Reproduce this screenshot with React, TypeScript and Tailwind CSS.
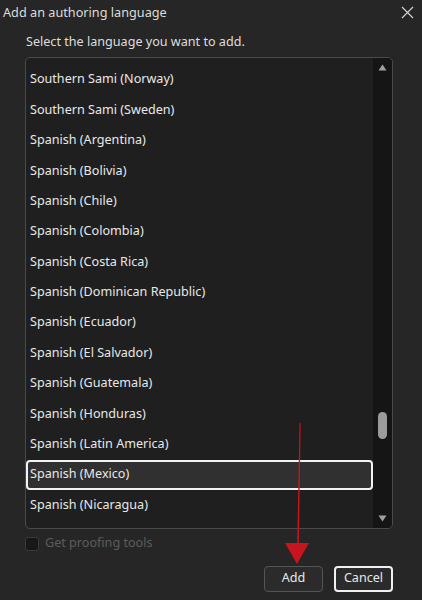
import { useState } from 'react';

const languages = [
  'Southern Sami (Norway)',
  'Southern Sami (Sweden)',
  'Spanish (Argentina)',
  'Spanish (Bolivia)',
  'Spanish (Chile)',
  'Spanish (Colombia)',
  'Spanish (Costa Rica)',
  'Spanish (Dominican Republic)',
  'Spanish (Ecuador)',
  'Spanish (El Salvador)',
  'Spanish (Guatemala)',
  'Spanish (Honduras)',
  'Spanish (Latin America)',
  'Spanish (Mexico)',
  'Spanish (Nicaragua)',
];

export default function App() {
  const [selected, setSelected] = useState('Spanish (Mexico)');

  return (
    <div
      className="relative w-[422px] h-[600px] bg-[#262626] text-[#e8e8e8] overflow-hidden"
      style={{ fontFamily: '"Noto Sans", "Open Sans", sans-serif' }}
    >
      {/* Title bar */}
      <div className="flex items-center justify-between h-[25px] pl-[3px] pr-[8px]">
        <span className="text-[12.7px] text-[#dcdcdc] leading-none">Add an authoring language</span>
        <svg width="13" height="13" viewBox="0 0 13 13" className="text-[#d0d0d0]">
          <path d="M1 1L12 12M12 1L1 12" stroke="currentColor" strokeWidth="1.2" />
        </svg>
      </div>

      <div className="pl-[25px] pr-[29px] pt-[11px]">
        <p className="text-[12.6px] leading-none pl-[1px] text-[#dedede]">Select the language you want to add.</p>

        {/* Language list */}
        <div className="mt-[8px] h-[472px] w-[368px] rounded-[5px] border border-[#4a4a4a] bg-[#1f1f1f] flex overflow-hidden">
          <div className="flex-1 pt-[7px]">
            {languages.map((lang) => (
              <div
                key={lang}
                onClick={() => setSelected(lang)}
                className={`h-[30.4px] flex items-center text-[12.6px] ${
                  lang === selected
                    ? 'bg-[#303030] border-2 border-[#f2f2f2] rounded-[4px] pl-[2px]'
                    : 'pl-[4px]'
                }`}
              >
                {lang}
              </div>
            ))}
          </div>

          {/* Scrollbar */}
          <div className="w-[19px] bg-[#151515] flex flex-col items-center justify-between py-[6px] rounded-r-[4px]">
            <svg width="9" height="7" viewBox="0 0 9 7">
              <path d="M4.5 0.5L8.5 6.5H0.5Z" fill="#a0a0a0" />
            </svg>
            <div className="flex-1 w-full flex flex-col items-center justify-end pb-[76px]">
              <div className="w-[9px] h-[27px] rounded-full bg-[#9b9b9b]" />
            </div>
            <svg width="9" height="7" viewBox="0 0 9 7">
              <path d="M0.5 0.5H8.5L4.5 6.5Z" fill="#a0a0a0" />
            </svg>
          </div>
        </div>

        {/* Disabled checkbox */}
        <label className="flex items-center gap-[6px] mt-[8px]">
          <span className="w-[14px] h-[14px] rounded-[2px] border border-[#3a3a3a] bg-[#181818]" />
          <span className="text-[12.6px] text-[#5c5c5c] leading-none">Get proofing tools</span>
        </label>

        {/* Actions */}
        <div className="flex justify-end gap-[11px] mt-[15px]">
          <button className="w-[59px] h-[26px] rounded-[4px] border border-[#555555] bg-[#2b2b2b] text-[12.6px] text-[#e8e8e8]">
            Add
          </button>
          <button className="w-[59px] h-[26px] rounded-[4px] border-2 border-[#f0f0f0] bg-[#2b2b2b] text-[12.6px] text-[#e8e8e8]">
            Cancel
          </button>
        </div>
      </div>

      {/* Red pointer arrow */}
      <svg className="absolute left-0 top-0 pointer-events-none" width="422" height="600" viewBox="0 0 422 600">
        <path d="M299.5 423L300.7 423L298.8 545L297.2 545Z" fill="#c8141c" />
        <path d="M285 543L309 543L297 564Z" fill="#c8141c" />
      </svg>
    </div>
  );
}
